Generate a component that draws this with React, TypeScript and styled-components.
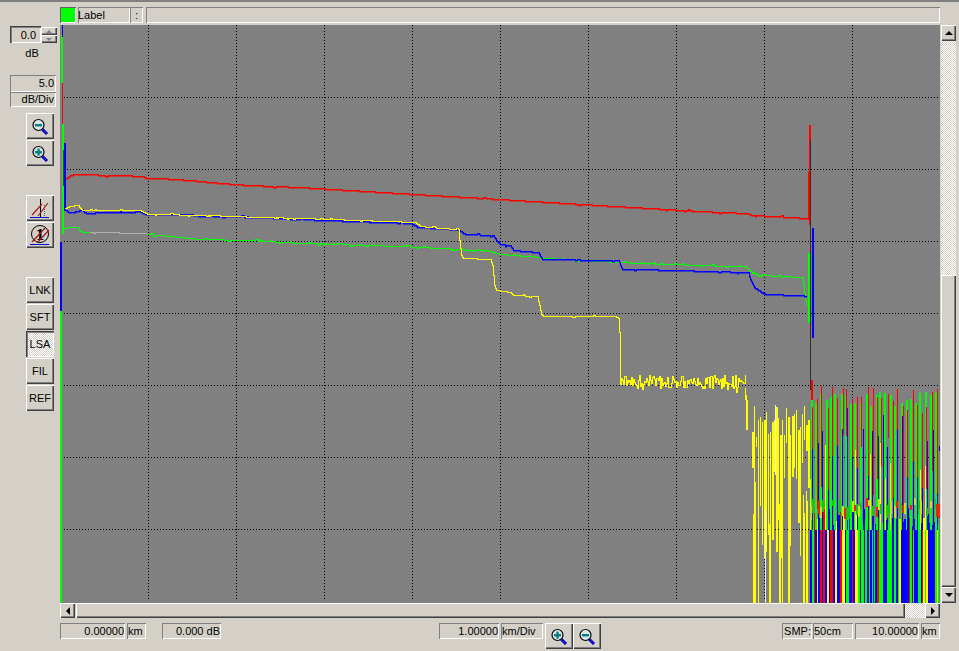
import React from "react";
import styled, { createGlobalStyle, css } from "styled-components";

const FACE = "#d4d0c8";
const Global = createGlobalStyle`
  html, body { margin: 0; padding: 0; background: ${FACE}; overflow: hidden; }
  * { box-sizing: border-box; }
`;

const raised = css`
  background-color: ${FACE};
  box-shadow: inset 1px 1px 0 #ffffff, inset -1px -1px 0 #404040, inset -2px -2px 0 #808080;
`;
const checker = css`
  background-color: ${FACE};
  background-image: repeating-conic-gradient(#ffffff 0 25%, ${FACE} 0 50%);
  background-size: 2px 2px;
`;
const sunkenThin = css`
  background-color: ${FACE};
  box-shadow: inset 1px 1px 0 #808080, inset -1px -1px 0 #ffffff;
`;

const Page = styled.div`
  width: 959px;
  height: 651px;
  overflow: hidden;
  border-top: 2px solid #808080;
  display: grid;
  grid-template-columns: 60px 899px;
  font: 11px "Liberation Sans", sans-serif;
  color: #000;
  background: ${FACE};
`;

/* ---------- left column ---------- */
const Sidebar = styled.aside`
  padding: 24px 0 0 10px;
  display: flex;
  flex-direction: column;
  align-items: flex-start;
`;
const SpinRow = styled.div`display: flex;`;
const SpinField = styled.div`
  width: 31px;
  height: 17px;
  background: ${FACE};
  box-shadow: inset 1px 1px 0 #404040, inset 2px 2px 0 #808080, inset -1px -1px 0 #ffffff;
  display: flex;
  align-items: center;
  justify-content: flex-end;
  padding-right: 5px;
`;
const SpinStack = styled.div`
  width: 16px;
  padding-top: 1px;
  display: flex;
  flex-direction: column;
`;
const SpinButton = styled.div`
  ${raised}
  height: 8px;
  display: flex;
  align-items: center;
  justify-content: center;
`;
const Caption = styled.div`
  width: 44px;
  height: 16px;
  line-height: 20px;
  text-align: center;
`;
const ScaleBlock = styled.div`
  margin-top: 16px;
  width: 46px;
`;
const ScaleValue = styled.div<{ $h: number }>`
  ${sunkenThin}
  height: ${(p) => p.$h}px;
  line-height: ${(p) => p.$h}px;
  text-align: right;
  padding-right: 2px;
`;
const ToolGroup = styled.div<{ $top: number }>`
  margin: ${(p) => p.$top}px 0 0 16px;
  display: flex;
  flex-direction: column;
  gap: 1px;
`;
const ToolButton = styled.button<{ $active?: boolean }>`
  appearance: none;
  border: 0;
  padding: 0;
  margin: 0;
  width: 28px;
  height: 26px;
  font: inherit;
  color: #000;
  display: flex;
  align-items: center;
  justify-content: center;
  ${(p) =>
    p.$active
      ? css`
          ${checker}
          box-shadow: inset 1px 1px 0 #404040, inset 2px 2px 0 #808080, inset -1px -1px 0 #ffffff;
        `
      : raised}
`;
const Arrow = styled.span<{ $dir: "up" | "down" | "left" | "right"; $size: number; $color?: string }>`
  width: 0;
  height: 0;
  border-style: solid;
  border-color: transparent;
  ${(p) => {
    const s = p.$size;
    const c = p.$color ?? "#000";
    if (p.$dir === "up") return `border-width: 0 ${s}px ${s}px ${s}px; border-bottom-color: ${c};`;
    if (p.$dir === "down") return `border-width: ${s}px ${s}px 0 ${s}px; border-top-color: ${c};`;
    if (p.$dir === "left") return `border-width: ${s}px ${s}px ${s}px 0; border-right-color: ${c};`;
    return `border-width: ${s}px 0 ${s}px ${s}px; border-left-color: ${c};`;
  }}
`;

/* ---------- main column ---------- */
const Main = styled.main`
  display: flex;
  flex-direction: column;
  padding-top: 5px;
`;
const LabelRow = styled.div`
  display: flex;
  height: 16px;
  width: 880px;
  margin-bottom: 2px;
`;
const Swatch = styled.div`
  width: 16px;
  height: 16px;
  background: #00ff00;
  box-shadow: inset 1px 1px 0 #606060, inset -1px -1px 0 #ffffff;
  margin-right: 2px;
`;
const LabelCell = styled.div<{ $w?: number; $gap?: number; $center?: boolean }>`
  ${sunkenThin}
  ${(p) => (p.$w ? `width: ${p.$w}px;` : "flex: 1;")}
  margin-right: ${(p) => p.$gap ?? 0}px;
  line-height: 16px;
  padding-left: 0;
  text-align: ${(p) => (p.$center ? "center" : "left")};
`;
const PlotRow = styled.div`
  display: flex;
  height: 578px;
`;
const PlotFrame = styled.div`
  width: 880px;
  height: 578px;
  background: #808080;
`;
const PlotSvg = styled.svg`
  display: block;
`;
const VScroll = styled.div`
  width: 15px;
  margin-left: 1px;
  display: flex;
  flex-direction: column;
`;
const ScrollButton = styled.div<{ $w?: number }>`
  ${raised}
  flex: none;
  width: ${(p) => p.$w ?? 15}px;
  height: ${(p) => (p.$w ? "100%" : "16px")};
  display: flex;
  align-items: center;
  justify-content: center;
`;
const Track = styled.div<{ $len: number; $horizontal?: boolean }>`
  ${checker}
  flex: none;
  ${(p) => (p.$horizontal ? `width: ${p.$len}px;` : `height: ${p.$len}px;`)}
`;
const Thumb = styled.div<{ $len: number; $horizontal?: boolean }>`
  ${raised}
  flex: none;
  ${(p) => (p.$horizontal ? `width: ${p.$len}px;` : `height: ${p.$len}px;`)}
`;
const HScroll = styled.div`
  width: 880px;
  height: 15px;
  display: flex;
`;
const ScrollGap = styled.div`
  width: 1px;
  flex: none;
`;
const StatusRow = styled.div`
  display: flex;
  align-items: flex-start;
  width: 880px;
  margin-top: 5px;
`;
const StatusGroup = styled.div<{ $left: number }>`
  display: flex;
  align-items: flex-start;
  margin-left: ${(p) => p.$left}px;
`;
const Field = styled.div<{ $w: number; $gap?: number; $left?: boolean }>`
  ${sunkenThin}
  width: ${(p) => p.$w}px;
  height: 16px;
  line-height: 16px;
  margin-right: ${(p) => p.$gap ?? 0}px;
  padding: 0 1px;
  text-align: ${(p) => (p.$left ? "left" : "right")};
  white-space: nowrap;
  overflow: hidden;
`;

/* ---------- icons ---------- */
function Magnifier({ plus }: { plus?: boolean }) {
  return (
    <svg width="28" height="26" viewBox="0 0 28 26">
      <line x1="16" y1="16" x2="21" y2="21" stroke="#0000c0" strokeWidth="3" />
      <line x1="16.5" y1="16.5" x2="20" y2="20" stroke="#8090e0" strokeWidth="1" strokeDasharray="1 2" />
      <circle cx="12.5" cy="12" r="5.5" fill="#dfe6e6" stroke="#000" strokeWidth="1.2" />
      <rect x="9" y="11" width="7" height="2.4" fill="#008080" />
      {plus && <rect x="11.3" y="8.6" width="2.4" height="7" fill="#008080" />}
    </svg>
  );
}
function MarkerIcon() {
  return (
    <svg width="28" height="26" viewBox="0 0 28 26">
      <line x1="14.5" y1="4" x2="14.5" y2="22" stroke="#000" strokeWidth="1" />
      <line x1="18.5" y1="10" x2="18.5" y2="22" stroke="#555" strokeWidth="1" strokeDasharray="1 1" />
      <line x1="6" y1="20" x2="16" y2="9" stroke="#a01818" strokeWidth="1.2" />
      <line x1="12" y1="21" x2="22" y2="8" stroke="#a01818" strokeWidth="1.2" />
      <line x1="4" y1="22.5" x2="23" y2="22.5" stroke="#0000d0" strokeWidth="1" />
    </svg>
  );
}
function EventIcon() {
  return (
    <svg width="28" height="26" viewBox="0 0 28 26">
      <circle cx="14" cy="12" r="8.5" fill="none" stroke="#000" strokeWidth="1" />
      <text x="14" y="18" textAnchor="middle" fontFamily="'Liberation Serif', serif" fontWeight="700" fontSize="17" fill="#000">
        1
      </text>
      <line x1="6" y1="20" x2="19" y2="6" stroke="#a01818" strokeWidth="1.2" />
      <line x1="11" y1="21" x2="23" y2="8" stroke="#a01818" strokeWidth="1.2" />
      <line x1="4" y1="22.5" x2="23" y2="22.5" stroke="#0000d0" strokeWidth="1" />
    </svg>
  );
}

/* ---------- traces ---------- */
function makeRand(seed: number) {
  let s = seed;
  return () => {
    s = (s * 1664525 + 1013904223) % 4294967296;
    return s / 4294967296;
  };
}
const rect = (x: number, y: number, w: number, h: number) => `M${x} ${y}h${w}v${h}h${-w}z`;

/* rasterise a polyline the way the instrument draws it: one column per pixel */
function raster(a: number[][], thick: number, jitter: number, seed: number, dy = 0) {
  const r = makeRand(seed);
  let out = "";
  let prev = Math.round(a[0][1]) + dy;
  let bump = 0;
  let left = 0;
  for (let i = 0; i < a.length - 1; i++) {
    const [x0, y0] = a[i];
    const [x1, y1] = a[i + 1];
    for (let x = Math.round(x0); x < Math.round(x1); x++) {
      if (left <= 0 && r() < jitter) {
        bump = r() > 0.5 ? -1 : 1;
        left = 1 + Math.floor(r() * 3);
      }
      const y = Math.round(y0 + ((y1 - y0) * (x - x0)) / (x1 - x0)) + (left > 0 ? bump : 0) + dy;
      left--;
      const top = Math.min(prev, y);
      out += rect(x, top, 1, Math.abs(prev - y) + thick);
      prev = y;
    }
  }
  return out;
}

const RED = "#ff0000";
const GREEN = "#00ff00";
const BLUE = "#0000ff";
const YELLOW = "#ffff00";

const redPts = [
  [66, 178], [70, 175], [75, 174], [120, 175], [143, 176], [146, 178], [160, 178], [190, 180], [222, 183],
  [250, 185], [300, 187], [400, 193], [500, 199], [600, 205], [700, 211], [748, 213], [752, 215], [775, 216], [790, 217], [808, 218],
];
const redLine = raster(redPts, 1, 0.01, 3);
const redHalo = raster(redPts, 1, 0.01, 3, 1);
const bluePts = [
  [66, 210], [68, 212], [72, 212], [80, 210], [82, 209], [84, 212], [88, 213], [100, 212], [128, 212],
  [140, 211], [145, 214], [150, 214], [190, 214], [200, 216], [230, 216], [265, 217], [280, 218], [300, 219], [410, 223],
  [420, 227], [440, 228], [458, 229], [462, 232], [466, 234], [493, 235], [496, 240], [500, 244], [510, 245], [513, 250],
  [538, 252], [542, 259], [618, 260], [622, 269], [640, 269], [748, 272], [750, 279], [754, 287], [760, 291], [765, 294], [800, 295], [807, 296],
];
const blueLine = raster(bluePts, 1, 0.025, 5);
const blueHalo = raster(bluePts, 1, 0.025, 5, 1);
const greenLine = raster([
  [62, 228], [70, 227], [78, 227], [79, 230], [82, 232], [90, 232],
], 1, 0, 7) + raster([
  [147, 234], [170, 236], [190, 238], [197, 239], [250, 240],
  [300, 243], [400, 246], [440, 248], [460, 249], [490, 251], [500, 254], [540, 257], [545, 258], [600, 261], [640, 263], [730, 266],
  [746, 266], [750, 271], [760, 275], [802, 277], [805, 300], [807, 310],
], 1, 0.08, 7);
const greyLine = raster([[90, 232], [147, 233]], 1, 0.02, 9);
const yellowLine = raster([
  [65, 208], [70, 206], [76, 205], [78, 205], [80, 208], [82, 210], [140, 210], [145, 213], [148, 214], [210, 215], [230, 216],
  [300, 218], [415, 222], [420, 226], [440, 228], [458, 229], [459, 240], [461, 255], [463, 258], [490, 259], [492, 265], [494, 285], [496, 290],
  [510, 292], [513, 295], [537, 296], [541, 314], [543, 316], [615, 316], [618, 318], [620, 345], [621, 372],
], 1, 0.04, 13) + rect(620, 345, 1, 40);

const r1 = makeRand(11);
let flatPath = "";
let flatPrev = 384;
for (let x = 621; x <= 745; x++) {
  const y = Math.round(375 + r1() * 13 + (r1() > 0.85 ? 4 : 0));
  flatPath += rect(x, Math.min(y, flatPrev), 1, Math.abs(y - flatPrev) + 1);
  flatPrev = y;
}
flatPath += rect(745, 388, 1, 12) + rect(746, 395, 1, 35) + rect(747, 400, 1, 30);

const yellowFloor = [753, 754, 755, 758, 769, 770, 779, 780, 782, 788, 789, 803, 804, 806, 807];
let deepPath = "";
for (let x = 752; x <= 808; x += 2) {
  const top = 403 + Math.round(r1() * 36);
  const bottom = 440 + Math.round(r1() * 120);
  deepPath += rect(x, top, r1() > 0.7 ? 2 : 1, bottom - top);
}
for (const x of yellowFloor) deepPath += rect(x, 480 + Math.round(r1() * 50), 1, 123);

const r2 = makeRand(29);
const lower: Record<string, string> = { [RED]: "", [GREEN]: "", [BLUE]: "", [YELLOW]: "" };
for (let x = 810; x < 939; ) {
  const v = r2();
  const c = v < 0.48 ? BLUE : v < 0.76 ? GREEN : v < 0.91 ? RED : YELLOW;
  const w = 1 + Math.floor(r2() * 2);
  const top = 508 + Math.round(r2() * 18);
  lower[c] += rect(x, top, w, 603 - top);
  x += w;
}
const upper: Record<string, string> = { [RED]: "", [GREEN]: "", [BLUE]: "", [YELLOW]: "" };
for (let x = 809; x < 939; x += 5) {
  const gx = x + Math.round(r2() * 2);
  const gt = 392 + Math.round(r2() * 14);
  upper[GREEN] += rect(gx, gt, 2, 530 - gt);
  const rx = x + 2 + Math.round(r2() * 2);
  const rt = 386 + Math.round(r2() * 28);
  upper[RED] += rect(rx, rt, 1, 25 + Math.round(r2() * 90));
  const bx = x + 3 + Math.round(r2() * 1);
  const bt = 408 + Math.round(r2() * 40);
  upper[BLUE] += rect(bx, bt, 1, 530 - bt);
  if (r2() > 0.6) {
    const yt = 440 + Math.round(r2() * 40);
    upper[YELLOW] += rect(x + 1, yt, 1, 530 - yt);
  }
}
const BAND_RED = "#e02818";
const BAND_GREEN = "#20c020";
const BAND_LIME = "#c8e020";
const band: Record<string, string> = { [BAND_RED]: "", [BAND_GREEN]: "", [BAND_LIME]: "" };
const bandKeys = [BAND_RED, BAND_GREEN, BAND_LIME, BAND_GREEN];
for (let x = 810; x < 939; x += 2) {
  if (r2() < 0.35) continue;
  const c = bandKeys[Math.floor(r2() * bandKeys.length)];
  const t = 498 + Math.round(r2() * 10);
  band[c] += rect(x, t, 2, 5 + Math.round(r2() * 10));
}

const BarSet = styled.path<{ $c: string; $soft?: boolean }>`
  fill: ${(p) => p.$c};
  fill-opacity: ${(p) => (p.$soft ? 0.5 : 1)};
  stroke: none;
`;

function Chart() {
  const vs = [148, 236, 324, 412, 500, 588, 676, 764, 852];
  const hs = [97, 169, 241, 313, 385, 457, 529];
  return (
    <PlotSvg width="880" height="578" viewBox="60 25 880 578" shapeRendering="crispEdges">
      {vs.map((x) => (
        <line key={x} x1={x + 0.5} y1={25} x2={x + 0.5} y2={601} stroke="#000" strokeDasharray="1 2" />
      ))}
      {hs.map((y) => (
        <line key={y} x1={64} y1={y + 0.5} x2={940} y2={y + 0.5} stroke="#000" strokeDasharray="1 2" />
      ))}
      <BarSet $c={GREEN} d={rect(60, 311, 2, 292)} />
      <BarSet $c={BLUE} d={rect(60, 242, 2, 69)} />
      <BarSet $c={GREEN} d={rect(61, 35, 2, 48) + rect(62, 124, 2, 110)} />
      <BarSet $c={BLUE} d={rect(62, 25, 1, 12)} />
      <BarSet $c={RED} d={rect(62, 83, 1, 41)} />
      <BarSet $c="#404040" d={rect(63, 150, 1, 36)} />
      <BarSet $c={BLUE} d={rect(64, 143, 2, 68)} />
      <BarSet $c="#b0b0b0" d={greyLine} />
      <BarSet $c={YELLOW} d={flatPath} />
      <BarSet $c={YELLOW} d={deepPath} />
      <BarSet $c={GREEN} d={greenLine} />
      <BarSet $c={BLUE} $soft d={blueHalo} />
      <BarSet $c={BLUE} d={blueLine} />
      <BarSet $c={YELLOW} d={yellowLine} />
      <BarSet $c={RED} $soft d={redHalo} />
      <BarSet $c={RED} d={redLine} />
      <BarSet $c="#f0f0d8" d={rect(765, 510, 1, 93) + rect(775, 405, 1, 70)} />
      <BarSet $c={YELLOW} d={lower[YELLOW]} />
      <BarSet $c={RED} d={lower[RED]} />
      <BarSet $c={GREEN} d={lower[GREEN]} />
      <BarSet $c={BLUE} d={lower[BLUE]} />
      <BarSet $c={GREEN} d={upper[GREEN]} />
      <BarSet $c={YELLOW} d={upper[YELLOW]} />
      <BarSet $c={BLUE} d={upper[BLUE]} />
      <BarSet $c={RED} d={upper[RED]} />
      <BarSet $c={BAND_RED} d={band[BAND_RED]} />
      <BarSet $c={BAND_GREEN} d={band[BAND_GREEN]} />
      <BarSet $c={BAND_LIME} d={band[BAND_LIME]} />
      <BarSet $c={GREEN} d={rect(808, 253, 2, 70)} />
      <BarSet $c={RED} d={rect(808, 172, 1, 48) + rect(809, 125, 2, 100)} />
      <BarSet $c="#303030" d={rect(810, 140, 1, 250)} />
      <BarSet $c={BLUE} d={rect(812, 228, 2, 110)} />
      <BarSet $c={RED} d={rect(811, 380, 2, 20)} />
      <BarSet $c={BLUE} d={rect(939, 446, 1, 5)} />
    </PlotSvg>
  );
}

export default function App() {
  return (
    <Page>
      <Global />
      <Sidebar>
        <SpinRow>
          <SpinField>0.0</SpinField>
          <SpinStack>
            <SpinButton><Arrow $dir="up" $size={3} $color="#808080" /></SpinButton>
            <SpinButton><Arrow $dir="down" $size={3} $color="#808080" /></SpinButton>
          </SpinStack>
        </SpinRow>
        <Caption>dB</Caption>
        <ScaleBlock>
          <ScaleValue $h={17}>5.0</ScaleValue>
          <ScaleValue $h={15}>dB/Div</ScaleValue>
        </ScaleBlock>
        <ToolGroup $top={6}>
          <ToolButton><Magnifier /></ToolButton>
          <ToolButton><Magnifier plus /></ToolButton>
        </ToolGroup>
        <ToolGroup $top={29}>
          <ToolButton><MarkerIcon /></ToolButton>
          <ToolButton><EventIcon /></ToolButton>
        </ToolGroup>
        <ToolGroup $top={29}>
          <ToolButton>LNK</ToolButton>
          <ToolButton>SFT</ToolButton>
          <ToolButton $active>LSA</ToolButton>
          <ToolButton>FIL</ToolButton>
          <ToolButton>REF</ToolButton>
        </ToolGroup>
      </Sidebar>
      <Main>
        <LabelRow>
          <Swatch />
          <LabelCell $w={52}>Label</LabelCell>
          <LabelCell $w={13} $gap={3} $center>:</LabelCell>
          <LabelCell />
        </LabelRow>
        <PlotRow>
          <PlotFrame><Chart /></PlotFrame>
          <VScroll>
            <ScrollButton><Arrow $dir="up" $size={4} /></ScrollButton>
            <Track $len={234} />
            <Thumb $len={312} />
            <ScrollButton><Arrow $dir="down" $size={4} /></ScrollButton>
          </VScroll>
        </PlotRow>
        <HScroll>
          <ScrollButton $w={15}><Arrow $dir="left" $size={4} /></ScrollButton>
          <ScrollGap />
          <Thumb $horizontal $len={829} />
          <Track $horizontal $len={20} />
          <ScrollButton $w={15}><Arrow $dir="right" $size={4} /></ScrollButton>
        </HScroll>
        <StatusRow>
          <StatusGroup $left={0}>
            <Field $w={65} $gap={2}>0.00000</Field>
            <Field $w={19} $gap={16} $left>km</Field>
            <Field $w={59}>0.000 dB</Field>
          </StatusGroup>
          <StatusGroup $left={218}>
            <Field $w={60} $gap={2}>1.00000</Field>
            <Field $w={42} $gap={2} $left>km/Div</Field>
            <ToolButton><Magnifier plus /></ToolButton>
            <ToolButton><Magnifier /></ToolButton>
          </StatusGroup>
          <StatusGroup $left={181}>
            <Field $w={30} $gap={1}>SMP:</Field>
            <Field $w={40} $gap={2} $left>50cm</Field>
            <Field $w={64} $gap={2}>10.00000</Field>
            <Field $w={19} $left>km</Field>
          </StatusGroup>
        </StatusRow>
      </Main>
    </Page>
  );
}
